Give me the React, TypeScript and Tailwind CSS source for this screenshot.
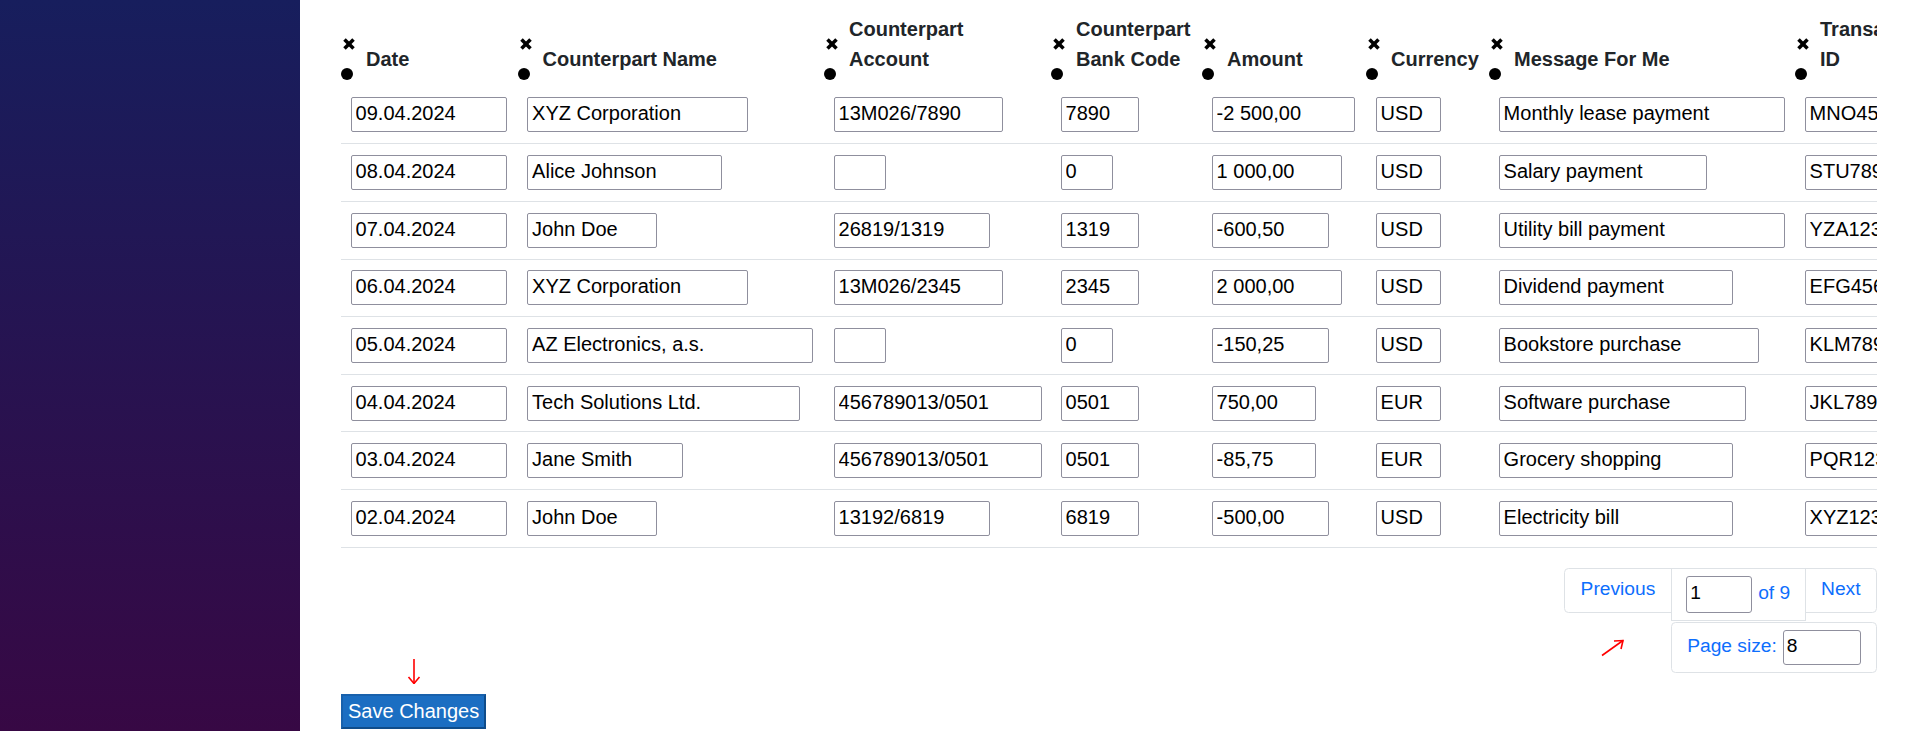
import React from 'react';

interface Transaction {
  date: string;
  name: string;
  account: string;
  bankCode: string;
  amount: string;
  currency: string;
  message: string;
  txId: string;
}

const transactions: Transaction[] = [
  { date: '09.04.2024', name: 'XYZ Corporation', account: '13M026/7890', bankCode: '7890', amount: '-2 500,00', currency: 'USD', message: 'Monthly lease payment', txId: 'MNO456789' },
  { date: '08.04.2024', name: 'Alice Johnson', account: '', bankCode: '0', amount: '1 000,00', currency: 'USD', message: 'Salary payment', txId: 'STU789012' },
  { date: '07.04.2024', name: 'John Doe', account: '26819/1319', bankCode: '1319', amount: '-600,50', currency: 'USD', message: 'Utility bill payment', txId: 'YZA123456' },
  { date: '06.04.2024', name: 'XYZ Corporation', account: '13M026/2345', bankCode: '2345', amount: '2 000,00', currency: 'USD', message: 'Dividend payment', txId: 'EFG456789' },
  { date: '05.04.2024', name: 'AZ Electronics, a.s.', account: '', bankCode: '0', amount: '-150,25', currency: 'USD', message: 'Bookstore purchase', txId: 'KLM789012' },
  { date: '04.04.2024', name: 'Tech Solutions Ltd.', account: '456789013/0501', bankCode: '0501', amount: '750,00', currency: 'EUR', message: 'Software purchase', txId: 'JKL789012' },
  { date: '03.04.2024', name: 'Jane Smith', account: '456789013/0501', bankCode: '0501', amount: '-85,75', currency: 'EUR', message: 'Grocery shopping', txId: 'PQR123456' },
  { date: '02.04.2024', name: 'John Doe', account: '13192/6819', bankCode: '6819', amount: '-500,00', currency: 'USD', message: 'Electricity bill', txId: 'XYZ123456' },
];

const columns: { key: keyof Transaction; label: string[]; width: string }[] = [
  { key: 'date', label: ['Date'], width: 'w-[176.5px]' },
  { key: 'name', label: ['Counterpart Name'], width: 'w-[306.5px]' },
  { key: 'account', label: ['Counterpart', 'Account'], width: 'w-[227px]' },
  { key: 'bankCode', label: ['Counterpart', 'Bank Code'], width: 'w-[151px]' },
  { key: 'amount', label: ['Amount'], width: 'w-[164px]' },
  { key: 'currency', label: ['Currency'], width: 'w-[123px]' },
  { key: 'message', label: ['Message For Me'], width: 'w-[306px]' },
  { key: 'txId', label: ['Transaction', 'ID'], width: 'w-[170px]' },
];

// inputs grow with their value, like size={value.length}
function fieldWidth(value: string) {
  const n = Math.min(Math.max(value.length, 2), 20);
  return 26 + 13 * n;
}

function ColumnTools() {
  return (
    <div className="flex w-[14px] shrink-0 flex-col">
      <svg className="ml-[2px]" width="12" height="12" viewBox="0 0 12 12">
        <line x1="1.5" y1="1.5" x2="10.5" y2="10.5" stroke="#000" strokeWidth="3.6" />
        <line x1="10.5" y1="1.5" x2="1.5" y2="10.5" stroke="#000" strokeWidth="3.6" />
      </svg>
      <svg className="mt-[18px]" width="12" height="12" viewBox="0 0 12 12">
        <circle cx="6" cy="6" r="6" fill="#000" />
      </svg>
    </div>
  );
}

export default function App() {
  return (
    <div className="flex min-h-screen bg-white font-['Liberation_Sans',Arial,Helvetica,sans-serif]">
      {/* Sidebar */}
      <div className="w-[300px] shrink-0 bg-[linear-gradient(180deg,#171e5d_0%,#370844_100%)]"></div>

      {/* Main */}
      <main className="min-w-0 flex-1 pl-[41px] pr-[29px]">
        <div className="overflow-hidden">
          <table className="w-[1624px] table-fixed border-collapse">
            <colgroup>
              {columns.map((col) => (
                <col key={col.key} className={col.width} />
              ))}
            </colgroup>
            <thead>
              <tr className="h-[86.4px]">
                {columns.map((col) => (
                  <th key={col.key} className="pb-[6.4px] pl-0 pr-[9.6px] text-left align-bottom">
                    <div className="flex items-end">
                      <ColumnTools />
                      <div className="mb-[6px] ml-[11px] whitespace-nowrap text-[20px] font-bold leading-[30px] text-[#212529]">
                        {col.label.map((line) => (
                          <div key={line}>{line}</div>
                        ))}
                      </div>
                    </div>
                  </th>
                ))}
              </tr>
            </thead>
            <tbody>
              {transactions.map((tx, i) => (
                <tr key={i}>
                  {columns.map((col) => (
                    <td key={col.key} className="h-[57.6px] border-b border-[#dee2e6] px-[9.6px] py-0 align-middle">
                      <input
                        defaultValue={tx[col.key]}
                        style={{ width: fieldWidth(tx[col.key]) }}
                        className="block h-[35px] rounded-[2px] border border-[#8f8f9d] bg-white px-[4px] pb-[2px] text-[20px] text-black outline-none"
                      />
                    </td>
                  ))}
                </tr>
              ))}
            </tbody>
          </table>
        </div>

        <div className="mt-[20px] flex items-start justify-between">
          {/* Save */}
          <div className="pt-[91px]">
            <div className="flex w-[146px] justify-center">
              <svg width="14" height="25" viewBox="0 0 14 25" fill="none" stroke="#ff0000" strokeWidth="1.6">
                <line x1="7" y1="0" x2="7" y2="24.5" />
                <polyline points="1.5,18 7,24.5 12.5,18" />
              </svg>
            </div>
            <button className="mt-[10px] block border-2 border-[#1861ac] border-r-[#0f4c8a] border-b-[#0f4c8a] bg-[#1b6ec2] px-[5px] pt-[1px] pb-[2px] text-[20px] leading-[28px] text-white">
              Save Changes
            </button>
          </div>

          {/* Pagination */}
          <div className="flex flex-col items-end text-[19.2px] leading-[28.8px] text-[#0d6efd]">
            <div className="flex items-start">
              <a className="rounded-l-[4.5px] border border-[#dee2e6] px-[15.5px] pt-[6.2px] pb-[8.2px]">Previous</a>
              <div className="-ml-px flex items-baseline gap-[6px] border border-[#dee2e6] px-[14.4px] py-[7.2px]">
                <input
                  defaultValue="1"
                  className="block h-[36.7px] w-[66px] rounded-[3px] border border-[#8f8f9d] px-[3px] pb-[2px] text-[19.2px] text-black outline-none"
                />
                <span>of 9</span>
              </div>
              <a className="-ml-px rounded-r-[4.5px] border border-[#dee2e6] px-[15.5px] pt-[6.2px] pb-[8.2px]">Next</a>
            </div>
            <div className="mt-px flex items-center">
              <svg className="mr-[46px]" width="24" height="18" viewBox="0 0 24 18" fill="none" stroke="#ff0000" strokeWidth="1.6">
                <line x1="1" y1="16.5" x2="22" y2="1.5" />
                <polyline points="13,2 22,1.5 20,10" />
              </svg>
              <div className="flex items-baseline gap-[6px] rounded-[4.5px] border border-[#dee2e6] px-[15.2px] pt-[7px] pb-[7.6px]">
                <span>Page size:</span>
                <input
                  defaultValue="8"
                  className="block h-[35px] w-[78px] rounded-[3px] border border-[#8f8f9d] px-[3px] pb-[2px] text-[19.2px] text-black outline-none"
                />
              </div>
            </div>
          </div>
        </div>
      </main>
    </div>
  );
}
